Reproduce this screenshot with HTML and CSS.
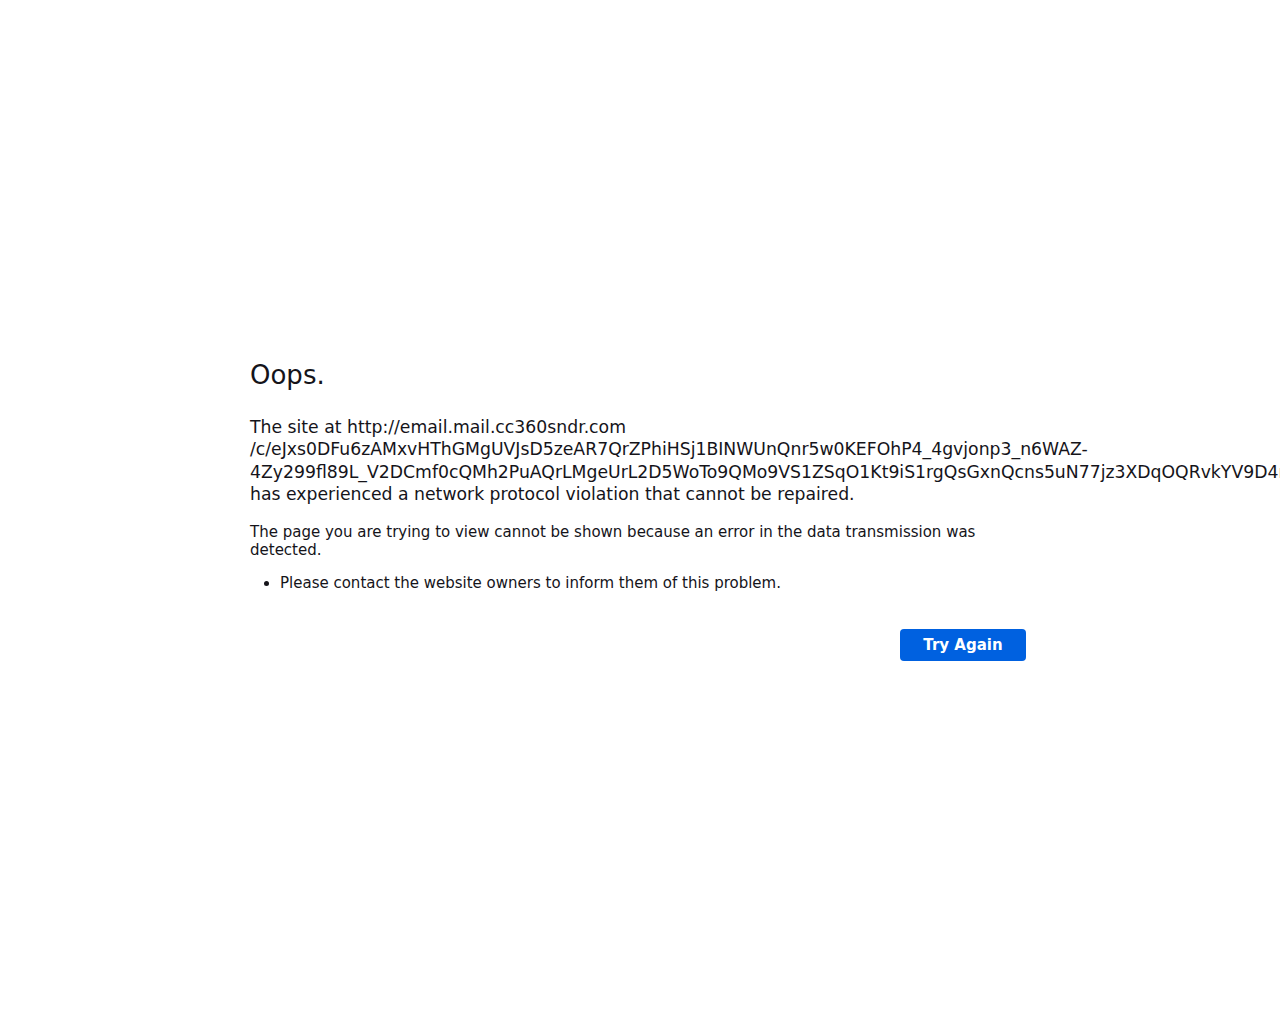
FILE: index.html
```html
<!DOCTYPE html>
<html lang="en">
<head>
    <meta charset="UTF-8">
    <title>Problem loading page</title>
    <link rel="stylesheet" href="styles.css">
</head>
<body>
    <div class="error-container">
        <h1 class="error-title">Oops.</h1>

        <p class="error-short">The site at http://email.mail.cc360sndr.com<br><span class="url-part">/c/eJxs0DFu6zAMxvHThGMgUVJsD5zeAR7QrZPhiHSj1BINWUnQnr5w0KEFOhP4_4gvjonp3_n6WAZ-</span><br><span class="url-part">4Zy299fl89L_V2DCmf0cQMh2PuAQrLMgeUrL2D5WoTo9QMo9VS1ZSqO1Kt9iS1rgQsGxnQcns5uN77jz3XDqOQRvkYV9D4mBcU2Wq0</span><br>has experienced a network protocol violation that cannot be repaired.</p>

        <p class="error-long">The page you are trying to view cannot be shown because an error in the data transmission was detected.</p>

        <ul class="error-list">
            <li>Please contact the website owners to inform them of this problem.</li>
        </ul>

        <div class="button-row">
            <button class="try-again">Try Again</button>
        </div>
    </div>
</body>
</html>
```

FILE: styles.css
```css
* {
    box-sizing: border-box;
}

html {
    overflow-x: hidden;
}

body {
    margin: 0;
    min-height: 100vh;
    display: flex;
    align-items: center;
    justify-content: center;
    font-family: "DejaVu Sans", sans-serif;
    font-size: 15px;
    color: #15141a;
    background: #fff;
}

.error-container {
    width: 780px;
    padding-bottom: 4px;
}

.error-title {
    margin: 0 0 23px;
    font-size: 26px;
    font-weight: normal;
    line-height: 1.3;
}

.error-short {
    margin: 0 0 17px;
    font-size: 17.25px;
    line-height: 22.4px;
}

.url-part {
    white-space: nowrap;
}

.error-long {
    margin: 0 0 15px;
    line-height: 18px;
}

.error-list {
    margin: 0 0 37px;
    padding-left: 30px;
    line-height: 18px;
}

.button-row {
    display: flex;
    justify-content: flex-end;
}

.try-again {
    margin-right: 4px;
    width: 126px;
    height: 32px;
    border: none;
    border-radius: 4px;
    background: #0061e0;
    color: #fff;
    font-family: "DejaVu Sans", sans-serif;
    font-size: 15px;
    font-weight: bold;
}
```
